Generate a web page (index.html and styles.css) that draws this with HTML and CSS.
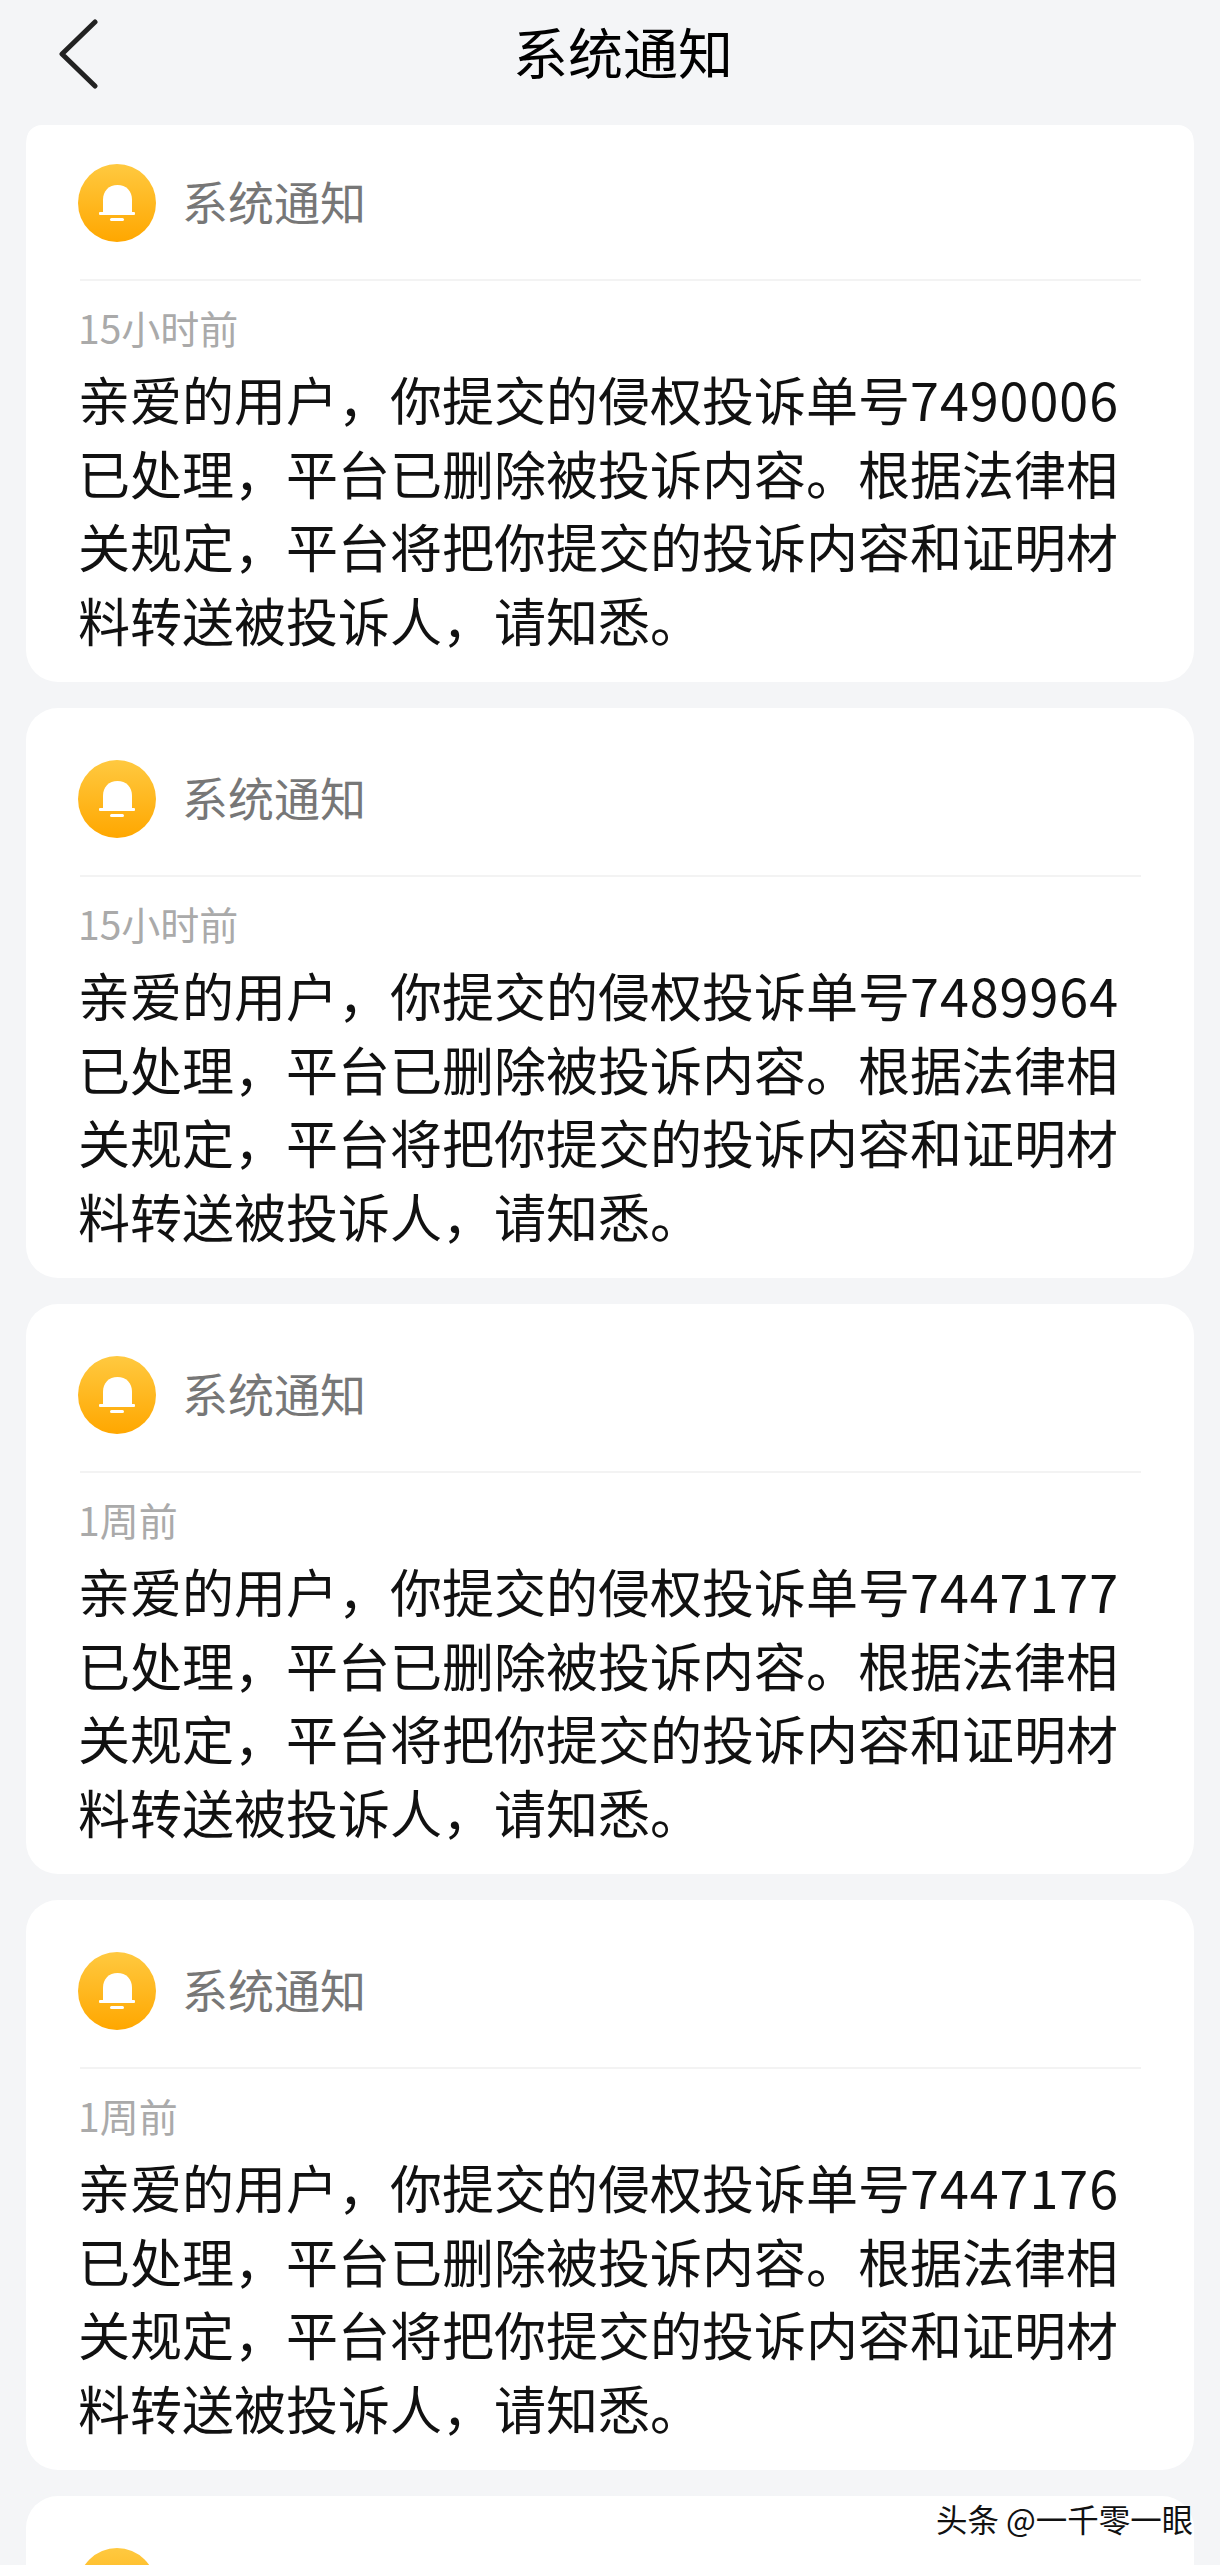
FILE: index.html
```html
<!DOCTYPE html>
<html lang="zh-CN">
<head>
<meta charset="utf-8">
<title>系统通知</title>
<link rel="stylesheet" href="styles.css">
</head>
<body>
<svg class="bell-defs" width="0" height="0" aria-hidden="true">
  <defs>
    <linearGradient id="bell-bg" x1="0" y1="0" x2="0" y2="1">
      <stop offset="0" stop-color="#ffc940"/>
      <stop offset="1" stop-color="#ffa700"/>
    </linearGradient>
    <symbol id="bell" viewBox="0 0 78 78">
      <circle cx="39" cy="39" r="39" fill="url(#bell-bg)"/>
      <path d="M25 48V35.500C25 27 31 21 39.500 21S54 27 54 35.500V48Z" fill="#fff"/>
      <rect x="21" y="48" width="36" height="3" rx="1" fill="#fff"/>
      <rect x="32" y="54" width="14" height="3" rx="1.500" fill="#fff"/>
    </symbol>
  </defs>
</svg>
<header class="topbar">
  <svg class="back" width="40" height="70" viewBox="0 0 40 70" aria-hidden="true">
    <path d="M36 3 3 35 36 67" fill="none" stroke="#222" stroke-width="5" stroke-linecap="round" stroke-linejoin="round"/>
  </svg>
  <h1 class="page-title">系统通知</h1>
</header>
<main class="list">
  <article class="card">
    <div class="card-head"><svg class="bell-icon"><use href="#bell"/></svg><span class="card-title">系统通知</span></div>
    <div class="time">15小时前</div>
    <p class="msg">亲爱的用户，你提交的侵权投诉单号<span class="num">7490006</span>已处理，平台已删除被投诉内容。根据法律相关规定，平台将把你提交的投诉内容和证明材料转送被投诉人，请知悉。</p>
  </article>
  <article class="card">
    <div class="card-head"><svg class="bell-icon"><use href="#bell"/></svg><span class="card-title">系统通知</span></div>
    <div class="time">15小时前</div>
    <p class="msg">亲爱的用户，你提交的侵权投诉单号<span class="num">7489964</span>已处理，平台已删除被投诉内容。根据法律相关规定，平台将把你提交的投诉内容和证明材料转送被投诉人，请知悉。</p>
  </article>
  <article class="card">
    <div class="card-head"><svg class="bell-icon"><use href="#bell"/></svg><span class="card-title">系统通知</span></div>
    <div class="time">1周前</div>
    <p class="msg">亲爱的用户，你提交的侵权投诉单号<span class="num">7447177</span>已处理，平台已删除被投诉内容。根据法律相关规定，平台将把你提交的投诉内容和证明材料转送被投诉人，请知悉。</p>
  </article>
  <article class="card">
    <div class="card-head"><svg class="bell-icon"><use href="#bell"/></svg><span class="card-title">系统通知</span></div>
    <div class="time">1周前</div>
    <p class="msg">亲爱的用户，你提交的侵权投诉单号<span class="num">7447176</span>已处理，平台已删除被投诉内容。根据法律相关规定，平台将把你提交的投诉内容和证明材料转送被投诉人，请知悉。</p>
  </article>
  <article class="card">
    <div class="card-head"><svg class="bell-icon"><use href="#bell"/></svg><span class="card-title">系统通知</span></div>
  </article>
</main>
<div class="watermark">头条 @一千零一眼</div>
</body>
</html>
```

FILE: styles.css
```css
html, body {
  margin: 0;
  padding: 0;
  height: 2565px;
  overflow: hidden;
}
body {
  position: relative;
  background: #f4f5f7;
  font-family: "Noto Sans CJK SC", "Noto Sans", sans-serif;
  color: #111;
}
.bell-defs {
  position: absolute;
}
.topbar {
  height: 125px;
  box-sizing: border-box;
  padding: 0 0 25px 26px;
  display: flex;
  align-items: center;
  justify-content: center;
  position: relative;
}
.back {
  position: absolute;
  left: 59px;
  top: 19px;
}
.page-title {
  margin: 0;
  font-size: 55px;
  font-weight: 400;
  line-height: 1;
  color: #000;
}
.list {
  margin: 0 26px;
  height: 2440px;
  overflow: hidden;
  border-radius: 16px 16px 0 0;
}
.card {
  background: #fff;
  border-radius: 32px;
  height: 570px;
  box-sizing: border-box;
  padding: 52px 53px 0 52px;
  margin-bottom: 26px;
}
.card:first-child {
  margin-top: -13px;
}
.card-head {
  display: flex;
  gap: 26px;
  height: 115px;
  align-items: flex-start;
  border-bottom: 2px solid #f3f3f3;
  margin-left: 2px;
}
.bell-icon {
  width: 78px;
  height: 78px;
  margin-left: -2px;
  flex: none;
}
.card-title {
  font-size: 46px;
  line-height: 72px;
  color: #777;
}
.time {
  font-size: 39px;
  line-height: 50px;
  color: #aaa;
  margin: 21px 0 0 0;
}
.msg {
  margin: 10px 0 0 0;
  font-size: 52px;
  line-height: 73.500px;
  color: #111;
}
.num {
  letter-spacing: 1px;
}
.watermark {
  position: absolute;
  left: 936px;
  top: 2498px;
  font-size: 31.500px;
  line-height: 40px;
  white-space: nowrap;
  color: #111;
  text-shadow: 0 0 2px #fff;
}
```
